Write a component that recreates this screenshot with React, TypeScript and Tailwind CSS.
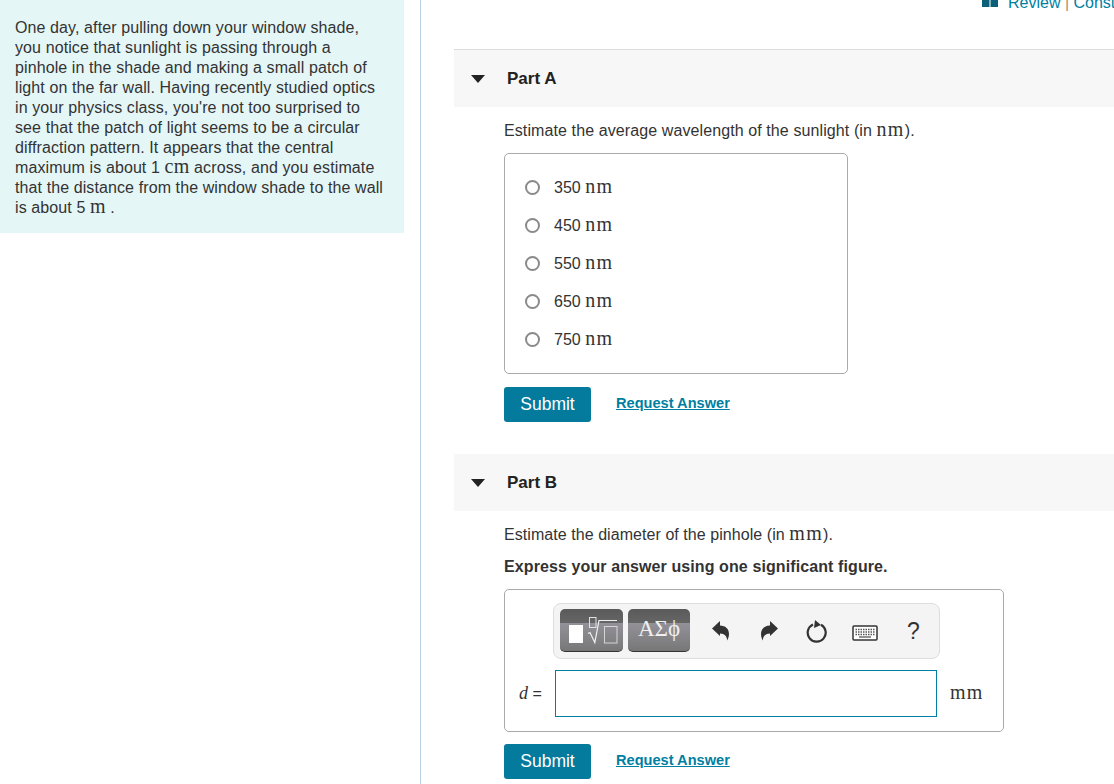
import React from 'react';

const options = ['350', '450', '550', '650', '750'];

function Unit({ children, tight }: { children: React.ReactNode; tight?: boolean }) {
    return <span className={`font-['Liberation_Serif',serif] text-[20px] leading-[0] ${tight ? 'tracking-[0.3px]' : 'tracking-[1.3px]'}`}>{children}</span>;
}

function PartHeader({ label, border }: { label: string; border?: boolean }) {
    return (
        <div className={`bg-[#f7f7f7] flex items-center ${border ? 'border-t border-[#dddddd] h-[58px]' : 'h-[57px]'}`}>
            <svg width="14" height="8" viewBox="0 0 14 8" className="ml-[17px] mt-[1px]">
                <path d="M0 0h14L7 8z" fill="#222222" />
            </svg>
            <h2 className="ml-[22px] text-[17px] font-bold text-[#222222]">{label}</h2>
        </div>
    );
}

function Actions() {
    return (
        <div className="flex items-center">
            <button className="w-[87px] h-[35px] bg-[#047a9c] rounded-[3px] text-white text-[17.5px]">Submit</button>
            <a href="#" className="ml-[25px] text-[14.6px] font-bold text-[#007fa3] underline -mt-[2px]">Request Answer</a>
        </div>
    );
}

function TemplateButton({ children, width }: { children: React.ReactNode; width: string }) {
    return (
        <div className={`${width} h-[43px] -mt-[1px] rounded-[5px] border-b border-[#333333] bg-[linear-gradient(#5a5a5a_0,#666666_34%,#939198_34%,#777777_100%)] flex items-center justify-center`}>
            {children}
        </div>
    );
}

function Toolbar() {
    return (
        <div className="ml-[48px] w-[387px] h-[56px] bg-[#f4f4f4] border border-[#dddddd] rounded-[8px] flex items-center pl-[6px] text-[#333333]">
            <TemplateButton width="w-[63px]">
                <svg width="63" height="43" viewBox="0 0 63 43">
                    <rect x="9" y="16" width="14" height="18" fill="#ffffff" />
                    <rect x="29.500" y="8.500" width="6.500" height="10" fill="none" stroke="#e2e2e2" />
                    <path d="M28 24.500l2-1 4.800 10 4.200-22h18" fill="none" stroke="#f0f0f0" strokeWidth="1.200" />
                    <rect x="44.500" y="17.500" width="12.500" height="16.500" fill="none" stroke="#d5d5d5" />
                </svg>
            </TemplateButton>
            <div className="w-[5px]" />
            <TemplateButton width="w-[62px]">
                <span className="font-['Liberation_Serif',serif] text-[23px] text-[#f0f0f0] -mt-[1px]">ΑΣϕ</span>
            </TemplateButton>
            <svg width="18" height="20" viewBox="0 0 18 20" className="ml-[22px]">
                <path d="M0 7.500L8 0v4.500c5.500 0 9 3.500 9 8.500 0 2.500-.8 4.700-1.800 6.500-.2-3.800-2.400-7-7.200-7V15z" fill="#333333" />
            </svg>
            <svg width="18" height="20" viewBox="0 0 18 20" className="ml-[30px]">
                <path d="M18 7.500L10 0v4.500C4.500 4.500 1 8 1 13c0 2.500.8 4.700 1.800 6.500.2-3.800 2.400-7 7.200-7V15z" fill="#333333" />
            </svg>
            <svg width="22" height="23" viewBox="0 0 22 23" className="ml-[28px]">
                <path d="M7 4.500a9 9 0 1 0 8 .3" fill="none" stroke="#333333" strokeWidth="2.200" />
                <path d="M9 0l6 5-7 3z" fill="#333333" />
            </svg>
            <svg width="26" height="16" viewBox="0 0 26 16" className="ml-[24px] mt-[3px]">
                <rect x="1" y="1" width="24" height="14" rx="1" fill="#ffffff" stroke="#333333" strokeWidth="1.500" />
                <path d="M3.500 4.500h19M3.500 7h19M3.500 9.500h19" stroke="#555555" strokeWidth="1.300" strokeDasharray="1.500 1" />
                <path d="M7 12h12" stroke="#555555" strokeWidth="1.300" />
            </svg>
            <span className="ml-[29px] text-[23px] leading-none">?</span>
        </div>
    );
}

export default function App() {
    return (
        <div className="w-[1114px] h-[784px] overflow-hidden bg-white flex font-['Liberation_Sans',Arial,sans-serif] text-[16px] text-[#333333]">
            {/* Intro panel */}
            <div className="w-[420px] shrink-0 border-r border-[#b9d0e4] box-content">
                <div className="w-[404px] h-[233px] bg-[#e5f6f7] pl-[15px] pr-[18px] pt-[18px] leading-[20px] tracking-[0.1px]">
                    One day, after pulling down your window shade, you notice that sunlight is passing through a pinhole in the shade and making a small patch of light on the far wall. Having recently studied optics in your physics class, you're not too surprised to see that the patch of light seems to be a circular diffraction pattern. It appears that the central maximum is about 1 <Unit tight>cm</Unit> across, and you estimate that the distance from the window shade to the wall is about 5 <Unit tight>m</Unit> .
                </div>
            </div>

            <div className="ml-[33px] flex-1 min-w-0">
                {/* Top links, cut by the window edge */}
                <div className="h-[49px] overflow-hidden">
                    <div className="ml-[528px] -mt-[9px] flex items-center whitespace-nowrap text-[#007fa3]">
                        <svg width="16" height="14" viewBox="0 0 16 14" className="shrink-0 -mt-[6px]">
                            <path d="M0 0h7.500v14H0zM8.500 0H16v14H8.500z" fill="#0b6079" />
                        </svg>
                        <span className="ml-[10px]">Review <span className="text-[#a98f6c]">|</span> Constants</span>
                    </div>
                </div>

                <PartHeader label="Part A" border />
                <div className="pl-[50px]">
                    <p className="mt-[15px] leading-[18px] tracking-[0.1px]">Estimate the average wavelength of the sunlight (in <Unit>nm</Unit>).</p>
                    <div className="mt-[13px] w-[344px] h-[221px] border border-[#aaaaaa] rounded-[5px] pt-[14px]">
                        {options.map((o) => (
                            <label key={o} className="h-[38px] flex items-center pl-[20px]">
                                <input type="radio" name="wavelength" className="appearance-none w-[15px] h-[15px] rounded-full border-2 border-[#8a8a8a] bg-white" />
                                <span className="ml-[14px] mt-[2px]">{o} <Unit>nm</Unit></span>
                            </label>
                        ))}
                    </div>
                    <div className="mt-[13px]">
                        <Actions />
                    </div>
                </div>

                <div className="mt-[32px]">
                    <PartHeader label="Part B" />
                </div>
                <div className="pl-[50px]">
                    <p className="mt-[15px] leading-[18px] tracking-[0.06px]">Estimate the diameter of the pinhole (in <Unit>mm</Unit>).</p>
                    <p className="mt-[14px] leading-[18px] font-bold tracking-[0.1px]">Express your answer using one significant figure.</p>
                    <div className="mt-[13px] w-[500px] h-[143px] border border-[#aaaaaa] rounded-[5px] pt-[13px]">
                        <Toolbar />
                        <div className="mt-[11px] flex items-center">
                            <span className="w-[50px] pl-[14px] whitespace-nowrap"><i className="font-['Liberation_Serif',serif] text-[18px] leading-[0]">d</i> =</span>
                            <input type="text" className="w-[382px] h-[47px] border border-[#007fa3] bg-white outline-none" />
                            <span className="ml-[13px]"><Unit>mm</Unit></span>
                        </div>
                    </div>
                    <div className="mt-[12px]">
                        <Actions />
                    </div>
                </div>
            </div>
        </div>
    );
}
